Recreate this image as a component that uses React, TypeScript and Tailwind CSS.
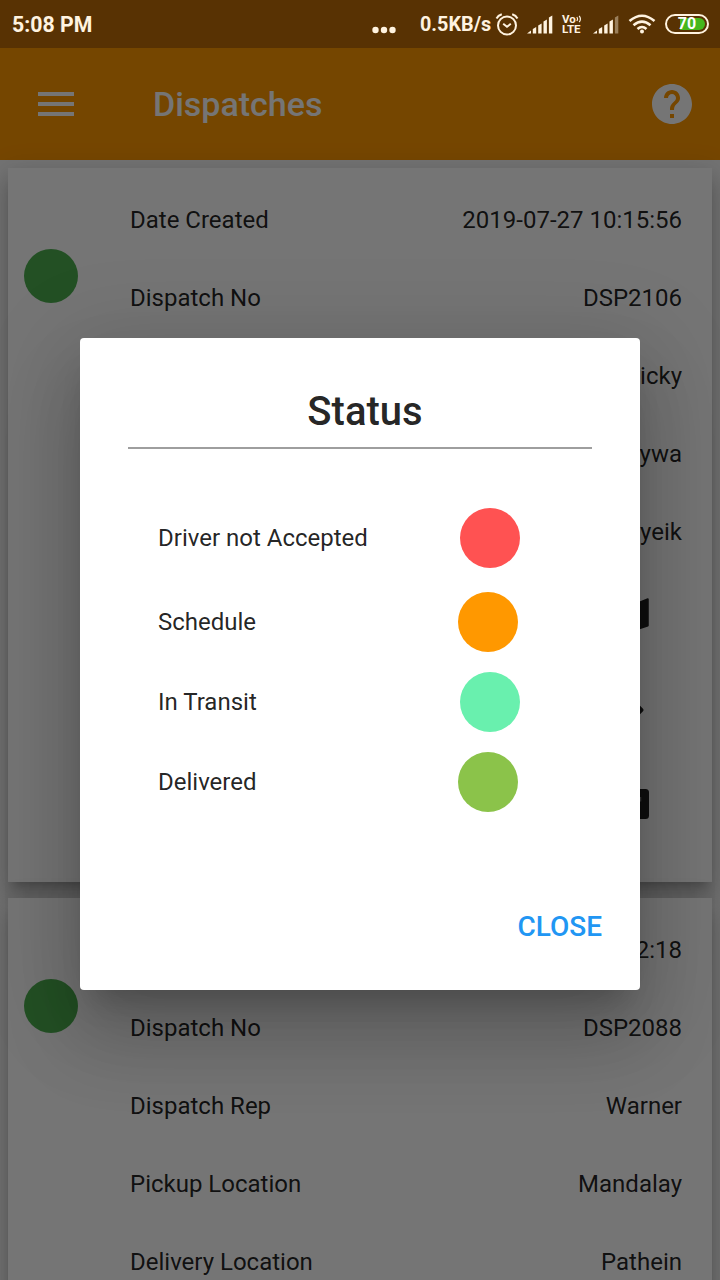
import React, { useState } from 'react';
import { MdHelp, MdMap } from 'react-icons/md';

const statuses = [
  { label: 'Driver not Accepted', row: 'h-[88px] pr-[120px]', dot: 'bg-[#ff5252]' },
  { label: 'Schedule', row: 'h-20 pr-[122px]', dot: 'bg-[#ff9800]' },
  { label: 'In Transit', row: 'h-20 pr-[120px]', dot: 'bg-[#69f0ae]' },
  { label: 'Delivered', row: 'h-20 pr-[122px]', dot: 'bg-[#8bc34a]' },
];

const dispatches = [
  {
    fields: [
      ['Date Created', '2019-07-27 10:15:56'],
      ['Dispatch No', 'DSP2106'],
      ['Dispatch Rep', 'Ricky'],
      ['Pickup Location', 'Monywa'],
      ['Delivery Location', 'Myeik'],
    ],
    actions: true,
  },
  {
    fields: [
      ['Date Created', '2019-07-27 10:12:18'],
      ['Dispatch No', 'DSP2088'],
      ['Dispatch Rep', 'Warner'],
      ['Pickup Location', 'Mandalay'],
      ['Delivery Location', 'Pathein'],
    ],
    actions: false,
  },
];

function Signal({ weak = false }: { weak?: boolean }) {
  return (
    <svg width="26" height="19" viewBox="0 0 26 19" fill="#fff3e0">
      <path d="M0 18.500L4 15.500v3z" />
      <path d="M5.800 14l3.400-2v6.500H5.800z" />
      <path d="M11.200 10.500l3.400-2v10h-3.400z" />
      <path d="M16.500 6.500l3.400-2v14h-3.400z" />
      <path d="M21.900 2.500l3.400-2v18h-3.400z" opacity={weak ? 0.4 : 1} />
    </svg>
  );
}

function StatusBar() {
  return (
    <div className="flex h-12 items-center bg-[#583203] pl-3 pr-[11px] text-[#fff3e0]">
      <span className="pt-[2px] text-[21.300px] font-bold leading-6">5:08 PM</span>
      <svg className="ml-auto mt-3" width="24" height="8" viewBox="0 0 24 8" fill="currentColor">
        <circle cx="3.500" cy="4" r="3.200" />
        <circle cx="12" cy="4" r="3.200" />
        <circle cx="20.500" cy="4" r="3.200" />
      </svg>
      <span className="ml-6 w-[72px] whitespace-nowrap pt-[2px] text-[19.800px] font-bold leading-6">0.5KB/s</span>
      <svg className="ml-[3px]" width="24" height="24" viewBox="0 0 24 24" fill="none" stroke="currentColor" strokeWidth="2">
        <circle cx="12" cy="13.500" r="9" />
        <path d="M8.200 11.800l3.800 3 3.800-3M1.500 6.500Q3 3.500 6.800 2.300M22.500 6.500Q21 3.500 17.200 2.300" />
      </svg>
      <div className="ml-2">
        <Signal />
      </div>
      <div className="ml-[9px] flex w-[22px] flex-col text-[11.500px] font-bold leading-[10px]">
        <span className="flex items-center">
          Vo
          <svg className="shrink-0" width="6" height="8" viewBox="0 0 6 8" fill="none" stroke="currentColor" strokeWidth="1.200">
            <path d="M.8 2Q2.300 4 .8 6M3.200 .8Q5.600 4 3.200 7.200" />
          </svg>
        </span>
        <span>LTE</span>
      </div>
      <div className="ml-[9px]">
        <Signal weak />
      </div>
      <svg className="ml-[9px]" width="28" height="20" viewBox="0 0 28 20" fill="none" stroke="currentColor" strokeWidth="2.600">
        <path d="M1.500 7Q14-3.500 26.500 7M5.500 11.200Q14 4 22.500 11.200M9.500 15Q14 11 18.500 15" />
        <circle cx="14" cy="17.500" r="2" fill="currentColor" stroke="none" />
      </svg>
      <div className="ml-[9px] flex h-5 w-11 items-center justify-center rounded-full border-2 border-[#fff3e0] p-[2px]">
        <div className="flex h-full w-full items-center justify-center rounded-full bg-linear-to-r from-[#583203] from-30% to-[#45b71c] to-30% text-[16px] font-bold leading-none text-white">
          70
        </div>
      </div>
    </div>
  );
}

function Actions() {
  return (
    <div className="flex flex-col items-end pr-[49px] text-[#212121]">
      <div className="flex h-[86px] items-center">
        <MdMap size={42} />
      </div>
      <div className="flex h-[106px] items-center pr-[10px]">
        <svg width="34" height="34" viewBox="0 0 34 34" fill="currentColor">
          <path d="M15.500 1.200q1.500-1.500 3 0l14.300 14.300q1.500 1.500 0 3L18.500 32.800q-1.500 1.500-3 0L1.200 18.500q-1.500-1.500 0-3z" />
        </svg>
      </div>
      <div className="flex h-[82px] items-center pr-[5px]">
        <svg width="40" height="30" viewBox="0 0 40 30">
          <rect width="40" height="30" rx="3.500" fill="currentColor" />
          <circle cx="13" cy="10" r="5" fill="#fff" />
          <path d="M3 25q0-7 10-7t10 7z" fill="#fff" />
          <path d="M31.500 8v4.500" stroke="#777" strokeWidth="1.500" />
        </svg>
      </div>
    </div>
  );
}

function DispatchCard({ dispatch }: { dispatch: (typeof dispatches)[number] }) {
  return (
    <div className="flex h-[714px] shrink-0 bg-white pl-4 pr-[9px] pt-[13px] shadow-[0_10px_10px_-6px_rgba(0,0,0,0.2),0_16px_20px_2px_rgba(0,0,0,0.14),0_6px_28px_4px_rgba(0,0,0,0.12)]">
      <div className="mt-[68px] size-[54px] shrink-0 rounded-full bg-[#4caf50]" />
      <div className="ml-[52px] flex-1">
        {dispatch.fields.map(([label, value]) => (
          <div key={label} className="flex h-[78px] items-center justify-between pr-[21px] text-[24px] text-black/87">
            <span>{label}</span>
            <span>{value}</span>
          </div>
        ))}
        {dispatch.actions && <Actions />}
      </div>
    </div>
  );
}

export default function App() {
  const [open, setOpen] = useState(true);

  return (
    <div className="flex h-[1280px] w-[720px] flex-col overflow-hidden font-['Roboto',sans-serif]">
      <StatusBar />
      <div className="relative flex min-h-0 flex-1 flex-col overflow-hidden bg-[#fafafa]">
        <header className="flex h-28 shrink-0 items-center bg-[#ff9800] pl-[38px] pr-6 text-white">
          <button className="flex flex-col gap-[6px]" aria-label="Menu">
            <span className="h-1 w-9 bg-white" />
            <span className="h-1 w-9 bg-white" />
            <span className="h-1 w-9 bg-white" />
          </button>
          <h1 className="ml-[79px] text-[34px] font-medium">Dispatches</h1>
          <button className="ml-auto" aria-label="Help" onClick={() => setOpen(true)}>
            <MdHelp size={48} />
          </button>
        </header>

        <main className="flex flex-col gap-4 px-2 pt-2">
          {dispatches.map((dispatch) => (
            <DispatchCard key={dispatch.fields[1][1]} dispatch={dispatch} />
          ))}
        </main>

        {/* Status legend */}
        {open && (
          <div className="absolute inset-0 flex items-start justify-center bg-black/54 pt-[290px]">
            <div className="flex h-[652px] w-[560px] flex-col rounded-[4px] bg-white px-12 pt-[43px] shadow-[0_22px_30px_-14px_rgba(0,0,0,0.2),0_48px_76px_6px_rgba(0,0,0,0.14),0_18px_92px_16px_rgba(0,0,0,0.12)]">
              <h2 className="h-[66px] pl-[10px] text-center text-[40px] font-medium leading-[62px] text-black/87">Status</h2>
              <div className="h-0.5 bg-[#9e9e9e]" />
              <div className="-mr-12 mt-[45px] pl-[30px]">
                {statuses.map((status) => (
                  <div key={status.label} className={`flex items-center justify-between text-[24px] text-black/87 ${status.row}`}>
                    <span>{status.label}</span>
                    <span className={`size-[60px] rounded-full ${status.dot}`} />
                  </div>
                ))}
              </div>
              <button
                className="-mr-[10px] mt-[85px] self-end text-[28px] font-medium leading-10 text-[#2196f3]"
                onClick={() => setOpen(false)}
              >
                CLOSE
              </button>
            </div>
          </div>
        )}
      </div>
    </div>
  );
}
